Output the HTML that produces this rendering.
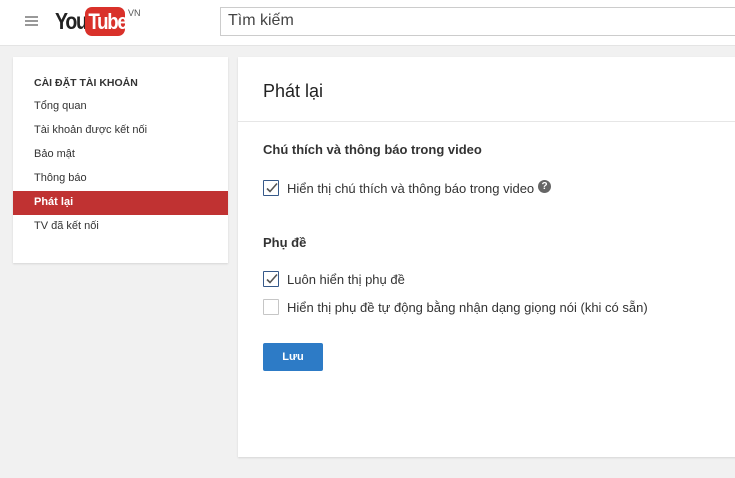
<!DOCTYPE html>
<html><head><meta charset="utf-8"><style>
*{margin:0;padding:0;box-sizing:border-box}
body{width:735px;height:478px;overflow:hidden;background:#f1f1f1;font-family:"Liberation Sans",Arial,sans-serif;color:#222;position:relative}
.hdr{position:absolute;left:0;top:0;width:735px;height:46px;background:#fff;border-bottom:1px solid #e4e4e4}
.abs{position:absolute}
.card{position:absolute;background:#fff;box-shadow:0 1px 2px rgba(0,0,0,.12)}
.nav{font-size:11px;color:#333;position:absolute;left:21px}
.cb{position:absolute;left:263px;width:16px;height:16px;border:1px solid #c6c6c6;background:#fff;border-radius:1px}
.cb.on{border-color:#36598a}
.lbl{position:absolute;left:287px;font-size:13px;color:#333}
</style></head><body>
<div class="hdr">
 <div class="abs" style="left:25px;top:16px;width:13px;height:2px;background:#999;box-shadow:0 4px 0 #999,0 8px 0 #999"></div>
 <div class="abs" style="left:55px;top:8px;font-size:23px;font-weight:bold;letter-spacing:-1.5px;color:#222;transform:scaleX(.85);transform-origin:left">You</div>
 <div class="abs" style="left:85px;top:7px;width:40px;height:29px;background:#d9312a;border-radius:7px;color:#fff;font-size:22px;font-weight:bold;letter-spacing:-1.5px;text-align:center;line-height:29px"><span style="display:inline-block;transform:scaleX(.85)">Tube</span></div>
 <div class="abs" style="left:128px;top:8px;font-size:9px;color:#555">VN</div>
 <div class="abs" style="left:220px;top:7px;width:520px;height:29px;border:1px solid #ccc;font-size:16px;color:#444;padding:4px 7px">Tìm kiếm</div>
</div>
<div class="card" style="left:13px;top:57px;width:215px;height:206px">
 <div class="nav" style="top:20px;font-weight:bold;font-size:10.5px">CÀI ĐẶT TÀI KHOẢN</div>
 <div class="nav" style="top:43px">Tổng quan</div>
 <div class="nav" style="top:67px">Tài khoản được kết nối</div>
 <div class="nav" style="top:91px">Bảo mật</div>
 <div class="nav" style="top:115px">Thông báo</div>
 <div class="abs" style="left:0;top:134px;width:215px;height:24px;background:#c03232"></div>
 <div class="nav" style="top:139px;color:#fff;font-weight:bold">Phát lại</div>
 <div class="nav" style="top:163px">TV đã kết nối</div>
</div>
<div class="card" style="left:238px;top:57px;width:510px;height:400px"></div>
<div class="abs" style="left:238px;top:121px;width:497px;height:1px;background:#e6e6e6"></div>
<div class="abs" style="left:263px;top:81px;font-size:18px;color:#222">Phát lại</div>
<div class="abs" style="left:263px;top:142px;font-size:13px;font-weight:bold;color:#333">Chú thích và thông báo trong video</div>
<div class="cb on" style="top:180px"></div>
<svg class="abs" style="left:265px;top:181px" width="14" height="14" viewBox="0 0 14 14"><path d="M2 7.5l3 3 7-8" fill="none" stroke="#555" stroke-width="1.6"/></svg>
<div class="lbl" style="top:181px">Hiển thị chú thích và thông báo trong video</div>
<div class="abs" style="left:538px;top:180px;width:13px;height:13px;border-radius:50%;background:#666;color:#fff;font-size:10px;font-weight:bold;text-align:center;line-height:13px">?</div>
<div class="abs" style="left:263px;top:235px;font-size:13px;font-weight:bold;color:#333">Phụ đề</div>
<div class="cb on" style="top:271px"></div>
<svg class="abs" style="left:265px;top:272px" width="14" height="14" viewBox="0 0 14 14"><path d="M2 7.5l3 3 7-8" fill="none" stroke="#555" stroke-width="1.6"/></svg>
<div class="lbl" style="top:272px">Luôn hiển thị phụ đề</div>
<div class="cb" style="top:299px"></div>
<div class="lbl" style="top:300px">Hiển thị phụ đề tự động bằng nhận dạng giọng nói (khi có sẵn)</div>
<div class="abs" style="left:263px;top:343px;width:60px;height:28px;background:#2d7bc6;border-radius:2px;color:#fff;font-size:11px;font-weight:bold;text-align:center;line-height:28px">Lưu</div>
</body></html>
